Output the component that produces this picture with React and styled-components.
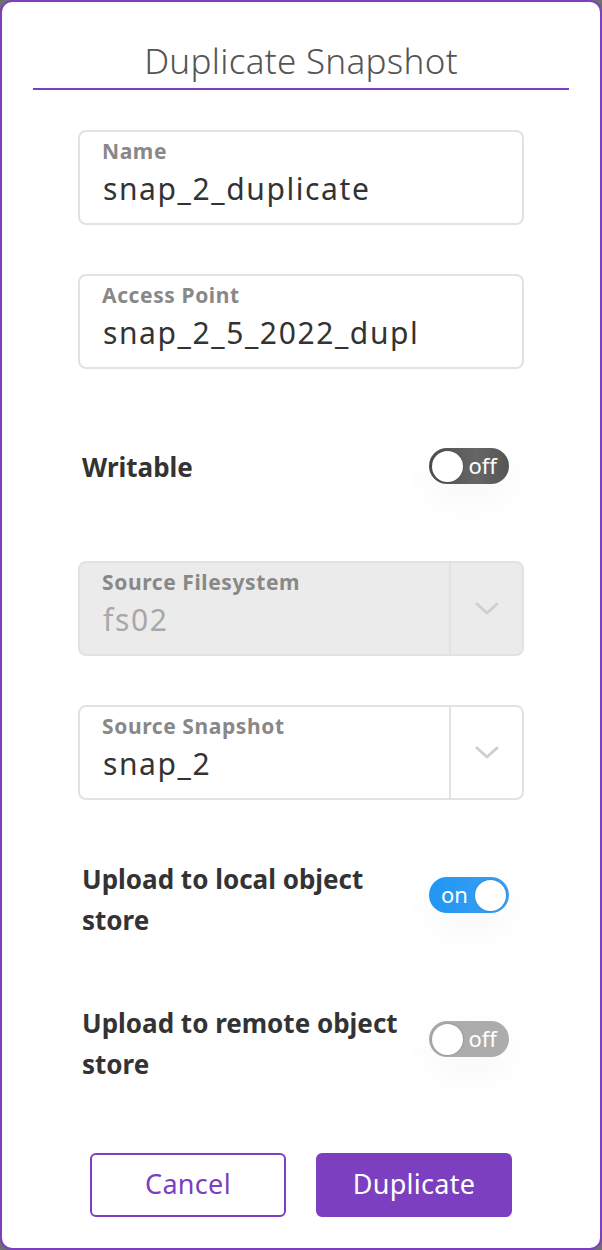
import React from "react";
import styled, { createGlobalStyle } from "styled-components";

const Global = createGlobalStyle`
  html, body { margin: 0; padding: 0; background: #6f6f6f; }
  body { font-family: "Noto Sans", "Open Sans", sans-serif; }
  * { box-sizing: border-box; }
`;

const Dialog = styled.div`
  width: 602px;
  height: 1250px;
  background: #fff;
  border: 2px solid #7b3fbf;
  border-radius: 12px;
  display: flex;
  flex-direction: column;
  align-items: center;
  overflow: hidden;
`;

const Title = styled.h1`
  margin: 0;
  margin-top: 36px;
  width: 536px;
  text-align: center;
  font-weight: 300;
  font-size: 35px;
  line-height: 46px;
  color: #555;
  padding-bottom: 4px;
  border-bottom: 2px solid #7b3fbf;
  letter-spacing: 0.3px;
`;

const Form = styled.div`
  width: 446px;
  display: flex;
  flex-direction: column;
  margin-top: 40px;
`;

const Field = styled.div`
  height: 95px;
  border: 2px solid #e2e2e2;
  border-radius: 8px;
  background: ${(p) => (p.disabled ? "#ebebeb" : "#fff")};
  display: flex;
  margin-bottom: ${(p) => p.mb || 49}px;
`;

const FieldBody = styled.div`
  flex: 1;
  padding: 5px 0 0 22px;
  display: flex;
  flex-direction: column;
`;

const FieldLabel = styled.div`
  font-size: 21px;
  font-weight: 700;
  color: #888;
  line-height: 28px;
  letter-spacing: 0.6px;
`;

const FieldValue = styled.div`
  font-size: 30px;
  line-height: 40px;
  letter-spacing: 1.6px;
  color: ${(p) => (p.disabled ? "#a8a8a8" : "#333")};
  margin-top: 4px;
  padding-left: 1px;
`;

const ChevronBox = styled.div`
  width: 73px;
  border-left: 2px solid #e2e2e2;
  display: flex;
  align-items: center;
  justify-content: center;
`;

const ToggleRow = styled.div`
  display: flex;
  align-items: ${(p) => p.align || "center"};
  justify-content: space-between;
  padding-left: 4px;
  margin-bottom: ${(p) => p.mb || 0}px;
`;

const RowLabel = styled.div`
  font-size: 26px;
  font-weight: 700;
  color: #333;
  line-height: 41px;
  padding-top: 3px;
  width: 330px;
`;

const Switch = styled.div`
  width: 80px;
  height: 36px;
  border-radius: 18px;
  margin-right: 15px;
  margin-top: ${(p) => p.offset || 0}px;
  background: ${(p) => p.bg};
  display: flex;
  align-items: center;
  flex-direction: ${(p) => (p.on ? "row" : "row-reverse")};
  justify-content: space-between;
  padding: 0 3px;
  box-shadow: 0 14px 40px rgba(0, 0, 0, 0.04);
`;

const SwitchText = styled.span`
  color: #fff;
  font-size: 22px;
  line-height: 1;
  padding: ${(p) => (p.on ? "0 0 3px 9px" : "0 9px 3px 0")};
`;

const Knob = styled.span`
  width: 31px;
  height: 31px;
  border-radius: 50%;
  background: #fff;
  box-shadow: 0 0 2px rgba(0, 0, 0, 0.3);
`;

const Buttons = styled.div`
  display: flex;
  gap: 30px;
  margin-top: auto;
  margin-bottom: 31px;
`;

const Button = styled.button`
  width: 196px;
  height: 64px;
  border-radius: 6px;
  border: 2px solid #7b3fbf;
  background: ${(p) => (p.primary ? "#7b3fbf" : "#fff")};
  color: ${(p) => (p.primary ? "#fff" : "#7b3fbf")};
  font-family: inherit;
  font-size: 27px;
  letter-spacing: 0.3px;
  padding: 0 0 4px;
`;

const Chevron = () => (
  <svg width="24" height="14" viewBox="0 0 24 14">
    <path d="M2 2 L12 11 L22 2" fill="none" stroke="#cfcfcf" strokeWidth="3" strokeLinecap="round" strokeLinejoin="round" />
  </svg>
);

const Toggle = ({ on, bg, offset }) => (
  <Switch on={on} bg={bg} offset={offset}>
    <SwitchText on={on}>{on ? "on" : "off"}</SwitchText>
    <Knob />
  </Switch>
);

export default function App() {
  return (
    <>
      <Global />
      <Dialog>
        <Title>Duplicate Snapshot</Title>
        <Form>
          <Field>
            <FieldBody>
              <FieldLabel>Name</FieldLabel>
              <FieldValue>snap_2_duplicate</FieldValue>
            </FieldBody>
          </Field>
          <Field mb={75}>
            <FieldBody>
              <FieldLabel>Access Point</FieldLabel>
              <FieldValue>snap_2_5_2022_dupl</FieldValue>
            </FieldBody>
          </Field>
          <ToggleRow mb={73}>
            <RowLabel>Writable</RowLabel>
            <Toggle on={false} bg="linear-gradient(90deg,#4f4f4f,#666 60%,#555)" />
          </ToggleRow>
          <Field disabled>
            <FieldBody>
              <FieldLabel>Source Filesystem</FieldLabel>
              <FieldValue disabled>fs02</FieldValue>
            </FieldBody>
            <ChevronBox><Chevron /></ChevronBox>
          </Field>
          <Field mb={56}>
            <FieldBody>
              <FieldLabel>Source Snapshot</FieldLabel>
              <FieldValue>snap_2</FieldValue>
            </FieldBody>
            <ChevronBox><Chevron /></ChevronBox>
          </Field>
          <ToggleRow align="flex-start" mb={59}>
            <RowLabel>Upload to local object store</RowLabel>
            <Toggle on bg="linear-gradient(90deg,#2196f3,#3aa0f5)" offset={21} />
          </ToggleRow>
          <ToggleRow align="flex-start">
            <RowLabel>Upload to remote object store</RowLabel>
            <Toggle on={false} bg="#acacac" offset={21} />
          </ToggleRow>
        </Form>
        <Buttons>
          <Button>Cancel</Button>
          <Button primary>Duplicate</Button>
        </Buttons>
      </Dialog>
    </>
  );
}
